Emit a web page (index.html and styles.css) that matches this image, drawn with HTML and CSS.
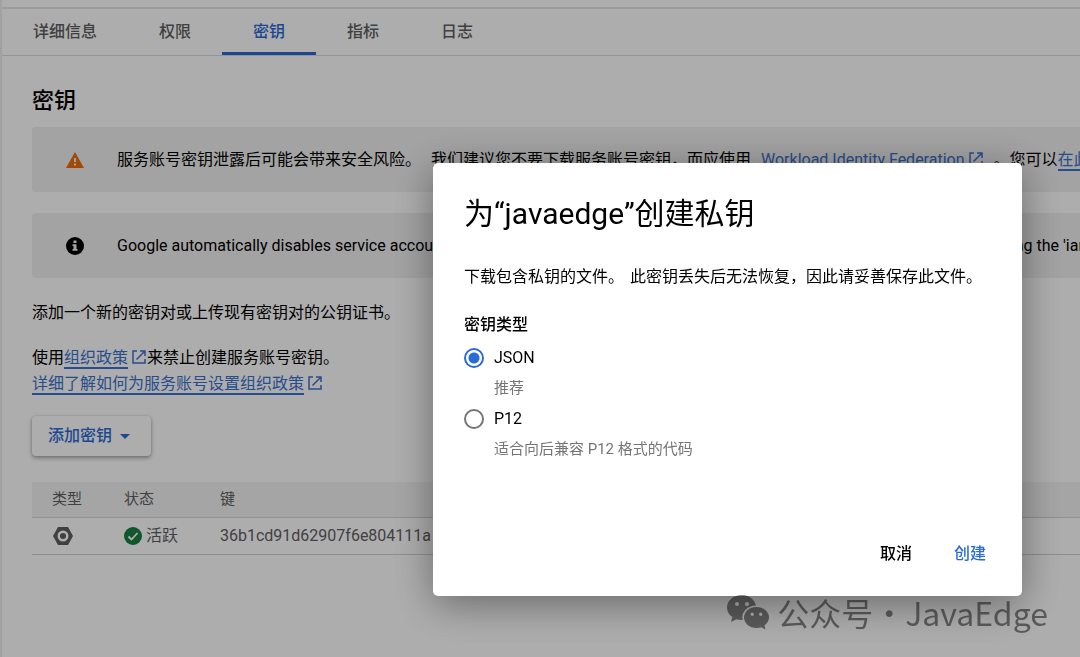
FILE: index.html
```html
<!DOCTYPE html>
<html lang="zh-CN">
<head>
<meta charset="utf-8">
<meta name="viewport" content="width=device-width, initial-scale=1">
<title>密钥</title>
<link rel="stylesheet" href="styles.css">
</head>
<body>
<svg class="defs" aria-hidden="true">
  <symbol id="open" viewBox="0 0 14 14"><path d="M5 1H1v12h12V9M8 1h5v5M13 1 4.500 9.500" fill="none" stroke="currentColor" stroke-width="1.500"/></symbol>
</svg>
<div class="page">
  <nav class="tabs">
    <a class="tab" href="#">详细信息</a>
    <a class="tab" href="#">权限</a>
    <a class="tab tab-active" href="#" aria-current="page">密钥</a>
    <a class="tab" href="#">指标</a>
    <a class="tab" href="#">日志</a>
  </nav>
  <main class="content">
    <h1 class="heading">密钥</h1>
    <div class="notice">
      <svg class="notice-icon" viewBox="0 0 18 18"><path d="M9 1 18 17H0Z" fill="#ed6c0e"/><path d="M8 7h2v4H8zM8 12.500h2v2H8z" fill="#f0f0f0"/></svg>
      <p class="notice-text"><span>服务账号密钥泄露后可能会带来安全风险。</span><span>我们建议您不要下载服务账号密钥，而应使用</span><a class="link ext" href="#"><span class="underline">Workload Identity Federation</span><svg class="open"><use href="#open"/></svg></a><span>。您可以<a class="link underline" href="#">在此</a></span></p>
    </div>
    <div class="notice">
      <svg class="notice-icon" viewBox="0 0 18 18"><circle cx="9" cy="9" r="9"/><path d="M7.500 3.500h3v2.500h-3zM6.500 7.200h4V12h1v1.800h-5V12h1V9h-1z" fill="#f0f0f0"/></svg>
      <p class="notice-text"><span>Google automatically disables service account keys detected in public repositories.</span><span>You can customize this behavior by updating the 'iam.serviceAccountKeyExposureResponse' organization policy.</span></p>
    </div>
    <p class="intro">添加一个新的密钥对或上传现有密钥对的公钥证书。</p>
    <p class="policy">使用<a class="link ext" href="#"><span class="underline">组织政策</span><svg class="open"><use href="#open"/></svg></a>来禁止创建服务账号密钥。<br><a class="link ext" href="#"><span class="underline">详细了解如何为服务账号设置组织政策</span><svg class="open"><use href="#open"/></svg></a></p>
    <button class="add" type="button">添加密钥<svg class="caret" viewBox="0 0 10 5"><path d="M0 0h10L5 5z" fill="currentColor"/></svg></button>
    <table class="keys">
      <thead><tr><th class="col-type">类型</th><th class="col-state">状态</th><th>键</th></tr></thead>
      <tbody><tr>
        <td><svg class="key-icon" viewBox="0 0 20 20"><path d="M5 1h10l5 9-5 9H5L0 10Z" fill="#5f5f5f"/><circle cx="10" cy="10" r="5.500" fill="#fff"/><circle cx="10" cy="10" r="3" fill="#5f5f5f"/></svg></td>
        <td><span class="state"><svg class="state-icon" viewBox="0 0 18 18"><circle cx="9" cy="9" r="9" fill="#188043"/><path d="m4.500 9.500 3 3 6-6.500" fill="none" stroke="#fff" stroke-width="1.800"/></svg>活跃</span></td>
        <td>36b1cd91d62907f6e804111a</td>
      </tr></tbody>
    </table>
  </main>
</div>
<div class="scrim">
  <section class="dialog" role="dialog" aria-modal="true" aria-labelledby="title">
    <h2 class="title" id="title">为“javaedge”创建私钥</h2>
    <p class="desc"><span>下载包含私钥的文件。</span><span>此密钥丢失后无法恢复，因此请妥善保存此文件。</span></p>
    <fieldset class="types">
      <legend class="legend">密钥类型</legend>
      <input class="radio" type="radio" name="type" id="json" checked><label class="option" for="json">JSON</label>
      <span class="hint">推荐</span>
      <input class="radio" type="radio" name="type" id="p12"><label class="option" for="p12">P12</label>
      <span class="hint">适合向后兼容 P12 格式的代码</span>
    </fieldset>
    <div class="actions">
      <button class="action" type="button">取消</button>
      <button class="action action-primary" type="button">创建</button>
    </div>
  </section>
</div>
<div class="watermark">
  <svg class="wechat" viewBox="0 0 42 35"><path fill="currentColor" fill-rule="evenodd" d="M15 0C6.500 0 0 5.500 0 12.500c0 4 2 7.300 5.300 9.600L4 27l5.300-2.700c2 .6 4 .8 6.400.7-2-8 5-14.500 13.300-14.500C27.500 4.500 22 0 15 0ZM10 7a2 2 0 1 1 0 4 2 2 0 0 1 0-4Zm10 0a2 2 0 1 1 0 4 2 2 0 0 1 0-4ZM29.500 12C22.500 12 17 16.700 17 22.500S22.500 33 29.500 33c1.700 0 3.300-.3 4.800-.8l4.200 2.300-1-4C40 28.500 42 25.700 42 22.500 42 16.700 36.500 12 29.500 12Zm-4.300 5.600a1.700 1.700 0 1 1 0 3.400 1.700 1.700 0 0 1 0-3.400Zm8.500 0a1.700 1.700 0 1 1 0 3.400 1.700 1.700 0 0 1 0-3.400Z"/></svg>
  <span>公众号·JavaEdge</span>
</div>
</body>
</html>
```
FILE: styles.css
```css
* { box-sizing: border-box; }
body {
  margin: 0;
  background: #fff;
  color: #000;
  font: 16px/26px Roboto, "Noto Sans CJK SC", sans-serif;
}
p, h1, h2 { margin: 0; }
.defs { position: absolute; width: 0; height: 0; }
.page {
  min-height: 100vh;
  padding-top: 7px;
  border-left: 2px solid #ededed;
  overflow: hidden;
}
.tabs {
  display: flex;
  border-top: 2px solid #e6e6e6;
  border-bottom: 1px solid #dcdcdc;
}
.tab {
  padding: 10px 31px 7px;
  border-bottom: 3px solid transparent;
  color: #5f5f5f;
  font-weight: 500;
  text-decoration: none;
}
.tab-active { color: #2b6bd6; border-color: #2b6bd6; }
.content { padding: 29px 0 0 30px; }
.heading { font-size: 22px; font-weight: 500; line-height: 32px; }
.notice {
  display: flex;
  align-items: center;
  gap: 33px;
  height: 65px;
  margin: 10px 0 21px;
  padding-left: 34px;
  border-radius: 4px 0 0 4px;
  background: #f0f0f0;
}
.notice + .notice { margin: 0 0 22px; }
.notice-icon { flex: none; width: 18px; height: 18px; }
.notice-text { display: flex; gap: 10px; white-space: nowrap; }
.link { color: #3a72d0; text-decoration: none; }
.underline { border-bottom: 2px solid currentColor; }
.open { width: 14px; height: 14px; margin: 0 1px 0 4px; vertical-align: -1px; }
.policy { margin-top: 19px; }
.add {
  display: flex;
  align-items: center;
  gap: 8px;
  margin-top: 19px;
  padding: 7px 21px 7px 16px;
  border: 0;
  border-radius: 4px;
  background: #fff;
  box-shadow: 0 2px 4px rgba(0, 0, 0, .35), 0 0 2px rgba(0, 0, 0, .15);
  color: #2b6bd6;
  font: inherit;
  font-weight: 500;
}
.caret { width: 10px; height: 5px; }
.keys {
  width: 100%;
  margin-top: 26px;
  border-collapse: collapse;
  color: #5f5f5f;
  text-align: left;
}
.keys th { height: 35px; padding: 0 0 0 20px; background: #f4f4f4; font-size: 15px; font-weight: 400; }
.keys td { height: 37px; padding: 0 0 0 20px; }
.keys tr { border-bottom: 1px solid #d2d2d2; }
.keys .col-type { width: 72px; }
.keys .col-state { width: 96px; }
.key-icon { display: block; width: 22px; height: 20px; }
.state { display: flex; align-items: center; gap: 4px; }
.state-icon { width: 18px; height: 18px; }
.scrim {
  position: fixed;
  inset: 0;
  display: flex;
  align-items: flex-start;
  justify-content: flex-end;
  padding: 163px 58px 0 20px;
  background: rgba(0, 0, 0, .32);
}
.dialog {
  width: 100%;
  max-width: 589px;
  padding: 29px 31px;
  border-radius: 5px;
  background: #fff;
  box-shadow: 0 8px 40px rgba(0, 0, 0, .4);
}
.title { font-size: 30px; font-weight: 400; line-height: 44px; }
.desc { display: flex; gap: 6px; margin: 28px 0 22px; white-space: nowrap; }
.types {
  display: grid;
  grid-template-columns: 20px 1fr;
  align-items: center;
  column-gap: 10px;
  margin: 0;
  padding: 0;
  border: 0;
}
.legend { padding: 0; font-weight: 500; }
.radio {
  appearance: none;
  width: 20px;
  height: 20px;
  margin: 0;
  border: 2px solid #757575;
  border-radius: 50%;
}
.radio:checked {
  border-color: #2b6bd6;
  background: radial-gradient(circle, #2b6bd6 5px, transparent 6px);
}
.option { line-height: 39px; }
.hint { grid-column: 2; color: #757575; font-size: 15px; line-height: 22px; }
.actions { display: flex; justify-content: flex-end; gap: 42px; margin: 81px 5px 0; }
.action { padding: 0; border: 0; background: none; color: #000; font: inherit; font-weight: 500; }
.action-primary { color: #2b6bd6; }
.watermark {
  position: fixed;
  right: 32px;
  bottom: 25px;
  display: flex;
  align-items: center;
  gap: 8px;
  color: rgba(0, 0, 0, .48);
  font: 32px/40px "Noto Sans CJK SC", sans-serif;
}
.wechat { width: 42px; height: 35px; }
```
